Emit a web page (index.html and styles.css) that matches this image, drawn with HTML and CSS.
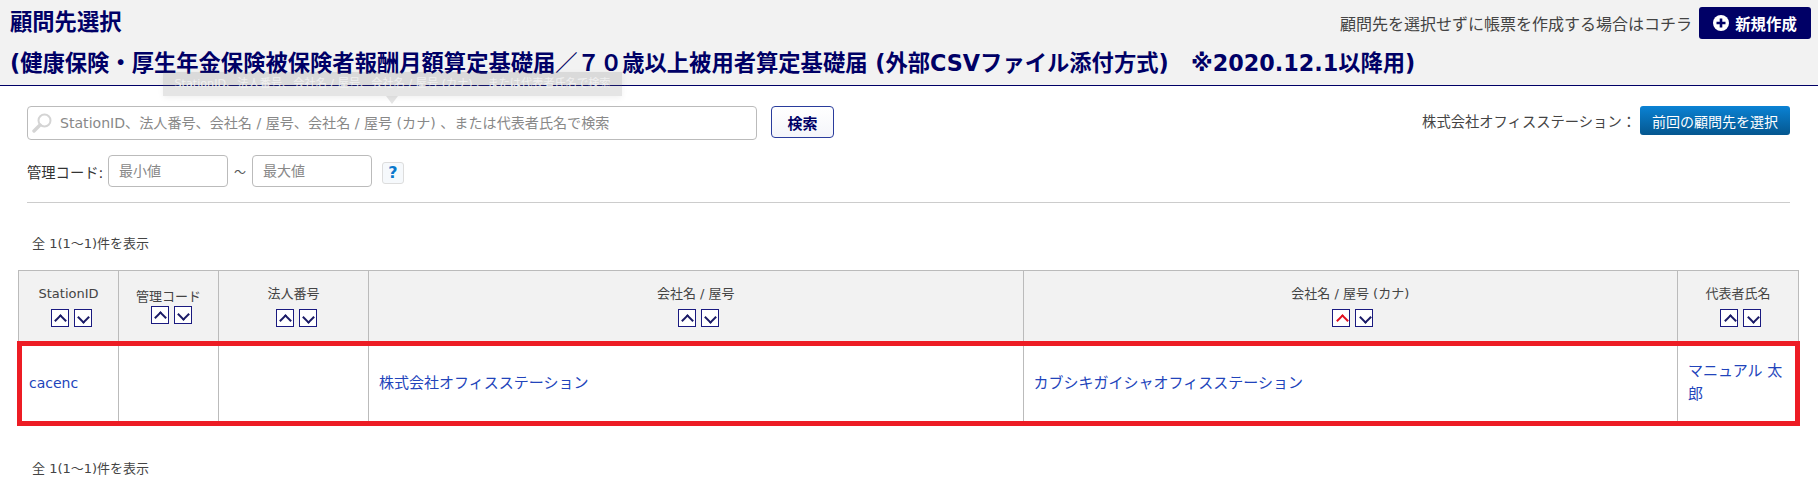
FILE: index.html
```html
<!DOCTYPE html>
<html lang="ja">
<head>
  <meta charset="UTF-8" />
  <title>顧問先選択</title>
  <link rel="stylesheet" href="styles.css">
</head>
<body>
  <!-- Header -->
  <div class="page-head">
    <div class="head-top">
      <h1>顧問先選択</h1>
      <div class="head-action">
        <span>顧問先を選択せずに帳票を作成する場合はコチラ</span>
        <button class="btn-new">
          <svg class="plus-icon" viewBox="0 0 16 16"><circle cx="8" cy="8" r="8" fill="#fff"/><path d="M8 3.5v9M3.5 8h9" stroke="#000066" stroke-width="2.6"/></svg>
          新規作成
        </button>
      </div>
    </div>
    <h2>(健康保険・厚生年金保険被保険者報酬月額算定基礎届／７０歳以上被用者算定基礎届 (外部CSVファイル添付方式)　※2020.12.1以降用)</h2>
  </div>

  <!-- Search -->
  <div class="search-area">
    <div class="search-main">
      <div class="search-row">
        <div class="search-box">
          <svg class="search-icon" viewBox="0 0 20 20"><circle cx="12.5" cy="7.5" r="6" fill="none" stroke="#d4d4d4" stroke-width="2"/><path d="M8 12l-6 6" stroke="#d4d4d4" stroke-width="3.4" stroke-linecap="round"/></svg>
          <input type="text" placeholder="StationID、法人番号、会社名 / 屋号、会社名 / 屋号 (カナ) 、または代表者氏名で検索">
          <div class="tooltip">StationID、法人番号、会社名 / 屋号、会社名 / 屋号 (カナ) 、または代表者氏名で検索</div>
        </div>
        <button class="btn-search">検索</button>
      </div>
      <div class="code-row">
        <label>管理コード:</label>
        <input class="code-input" type="text" placeholder="最小値">
        <span class="tilde">～</span>
        <input class="code-input" type="text" placeholder="最大値">
        <span class="help">?</span>
      </div>
    </div>
    <div class="search-prev">
      <span>株式会社オフィスステーション：</span>
      <button class="btn-prev">前回の顧問先を選択</button>
    </div>
  </div>

  <hr class="divider">

  <p class="count count-top">全 1(1～1)件を表示</p>

  <!-- Table -->
  <div class="table-wrap">
    <table class="client-table">
      <colgroup>
        <col class="c-id"><col class="c-code"><col class="c-corp"><col class="c-name"><col class="c-kana"><col class="c-rep">
      </colgroup>
      <thead>
        <tr>
          <th>StationID
            <div class="sort"><a class="up"></a><a class="down"></a></div></th>
          <th class="th-tight">管理コード
            <div class="sort"><a class="up"></a><a class="down"></a></div></th>
          <th>法人番号
            <div class="sort"><a class="up"></a><a class="down"></a></div></th>
          <th>会社名 / 屋号
            <div class="sort"><a class="up"></a><a class="down"></a></div></th>
          <th>会社名 / 屋号 (カナ)
            <div class="sort"><a class="up on"></a><a class="down"></a></div></th>
          <th>代表者氏名
            <div class="sort"><a class="up"></a><a class="down"></a></div></th>
        </tr>
      </thead>
      <tbody>
        <tr>
          <td><a class="id-link" href="#">cacenc</a></td>
          <td></td>
          <td></td>
          <td><a href="#">株式会社オフィスステーション</a></td>
          <td><a href="#">カブシキガイシャオフィスステーション</a></td>
          <td><a href="#">マニュアル 太郎</a></td>
        </tr>
      </tbody>
    </table>
    <div class="mark"></div>
  </div>

  <p class="count count-bottom">全 1(1～1)件を表示</p>
</body>
</html>
```

FILE: styles.css
```css
:root {
  --navy: #000066;
  --line: #bbbbbb;
  --link: #2244bb;
}
* { box-sizing: border-box; }
body {
  margin: 0;
  font-family: "DejaVu Sans", "Noto Sans CJK JP", sans-serif;
  font-size: 14px;
  color: #333;
  background: #fff;
  overflow: hidden;
}
/* header */
.page-head {
  height: 86px;
  padding: 7px 7px 0 10px;
  background: #f2f2f2;
  border-bottom: 1px solid var(--navy);
}
.head-top {
  display: flex;
  justify-content: space-between;
  align-items: flex-start;
  height: 32px;
}
h1, h2 {
  margin: 0;
  font-size: 22.3px;
  font-weight: bold;
  color: var(--navy);
}
h1 { line-height: 30px; }
h2 { margin-top: 9px; line-height: 30px; white-space: nowrap; }
.head-action {
  display: flex;
  align-items: center;
  gap: 7px;
  font-size: 16px;
  color: #444;
}
.btn-new {
  display: flex;
  align-items: center;
  justify-content: center;
  gap: 6px;
  width: 112px; height: 32px;
  border: none;
  border-radius: 3px;
  background: var(--navy);
  color: #fff;
  font: bold 15.4px "DejaVu Sans", "Noto Sans CJK JP", sans-serif;
}
.plus-icon { width: 16px; height: 16px; }
/* search */
.search-area {
  display: flex;
  justify-content: space-between;
  padding: 20px 28px 0 27px;
}
.search-row { display: flex; gap: 14px; }
.search-box { position: relative; width: 730px; height: 34px; }
.search-box input {
  width: 100%; height: 100%;
  padding: 0 8px 0 32px;
  border: 1px solid var(--line);
  border-radius: 4px;
  font: 14.1px "DejaVu Sans", "Noto Sans CJK JP", sans-serif;
}
.search-icon {
  position: absolute;
  left: 5px; top: 7px;
  width: 20px; height: 20px;
}
input::placeholder { color: #888; opacity: 1; }
.tooltip {
  position: absolute;
  left: 136px; top: -34px;
  width: 459px; height: 24px;
  background: rgba(110,110,110,.18);
  box-shadow: 0 2px 6px rgba(0,0,0,.06);
  color: #f0f0f0;
  font-size: 11.2px;
  line-height: 24px;
  text-align: center;
  white-space: nowrap;
}
.tooltip::after {
  content: "";
  position: absolute;
  left: 223px; top: 24px;
  border: 6px solid transparent;
  border-bottom: none;
  border-top: 8px solid rgba(110,110,110,.18);
}
.btn-search {
  width: 63px; height: 32px;
  border: 1px solid #2a3c9c;
  border-radius: 4px;
  background: linear-gradient(#fff, #f4f5fa);
  color: var(--navy);
  font: bold 15px "DejaVu Sans", "Noto Sans CJK JP", sans-serif;
}
.code-row {
  display: flex;
  align-items: center;
  margin-top: 15px;
  font-size: 14.3px;
  height: 32px;
}
.code-row label { width: 81px; }
.code-input {
  width: 120px; height: 32px;
  padding: 0 10px;
  border: 1px solid var(--line);
  border-radius: 4px;
  font: 14px "DejaVu Sans", "Noto Sans CJK JP", sans-serif;
}
.tilde { width: 24px; font-size: 12px; color: #555; text-align: center; }
.help {
  width: 22px; height: 22px;
  margin: 3px 0 0 10px;
  border: 1px solid #ddd;
  border-radius: 3px;
  background: #f6f9fc;
  color: #0a78cc;
  font-weight: bold;
  font-size: 16px;
  line-height: 20px;
  text-align: center;
}
.search-prev {
  display: flex;
  align-items: center;
  gap: 4px;
  height: 29px;
  font-size: 14.3px;
  color: #444;
}
.btn-prev {
  width: 150px; height: 29px;
  border: none;
  border-radius: 3px;
  background: linear-gradient(#0a82d4, #05578f);
  color: #fff;
  font: 14px "DejaVu Sans", "Noto Sans CJK JP", sans-serif;
}
.divider {
  margin: 15px 28px 0 27px;
  border: none;
  border-top: 1px solid #ccc;
}
.count {
  margin: 0;
  padding-left: 32px;
  font-size: 13px;
  line-height: 16px;
  color: #444;
}
.count-top { margin-top: 33px; }
.count-bottom { margin-top: 36px; }
/* table */
.table-wrap {
  position: relative;
  margin: 18px 19px 0 18px;
}
.client-table {
  width: 100%;
  table-layout: fixed;
  border-collapse: collapse;
}
.c-id, .c-code { width: 100px; }
.c-corp { width: 150px; }
.c-name, .c-kana { width: 654.5px; }
.client-table th, .client-table td {
  border: 1px solid var(--line);
}
.client-table th {
  height: 71px;
  padding: 0;
  background: #f2f2f2;
  color: #444;
  font-size: 13px;
  font-weight: normal;
  line-height: 18px;
  text-align: center;
}
.client-table td {
  height: 83px;
  padding: 0 10px;
  font-size: 15px;
  line-height: 23px;
}
.client-table td a { color: var(--link); text-decoration: none; }
.client-table td .id-link { font-size: 14px; }
.sort {
  display: flex;
  justify-content: center;
  gap: 5px;
  margin: 6px 0 0 5px;
}
.th-tight .sort { margin-top: 0; }
.sort a {
  position: relative;
  width: 18px; height: 18px;
  border: 1px solid #1a1a80;
  background: #fff;
}
.sort a::after {
  content: "";
  position: absolute;
  left: 4.5px;
  width: 7px; height: 7px;
  border-left: 2px solid #1a1a66;
  border-top: 2px solid #1a1a66;
}
.sort .up::after { top: 5.5px; transform: rotate(45deg); }
.sort .down::after { top: 2.5px; transform: rotate(225deg); }
.sort .on::after { border-color: #e01020; }
/* 赤枠 */
.mark {
  position: absolute;
  left: -1px; right: -1px;
  top: 71px; height: 85px;
  border: 5px solid #ed1c24;
}
```
